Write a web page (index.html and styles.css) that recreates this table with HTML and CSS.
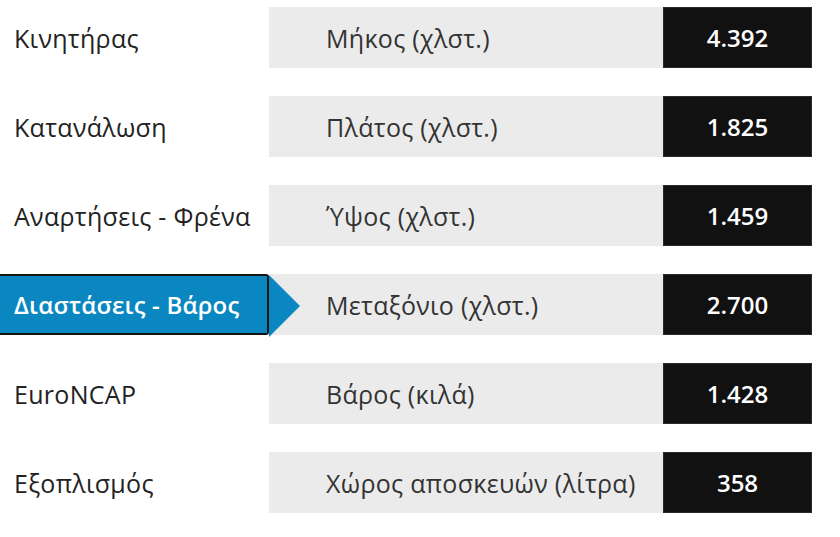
FILE: index.html
```html
<!DOCTYPE html>
<html lang="el">
<head>
<meta charset="utf-8">
<link rel="stylesheet" href="styles.css">
</head>
<body>
<div class="specs">
  <div class="row">
    <div class="tab">Κινητήρας</div>
    <div class="label">Μήκος (χλστ.)</div>
    <div class="value">4.392</div>
  </div>
  <div class="row">
    <div class="tab">Κατανάλωση</div>
    <div class="label">Πλάτος (χλστ.)</div>
    <div class="value">1.825</div>
  </div>
  <div class="row">
    <div class="tab">Αναρτήσεις - Φρένα</div>
    <div class="label">Ύψος (χλστ.)</div>
    <div class="value">1.459</div>
  </div>
  <div class="row">
    <div class="tab active">Διαστάσεις - Βάρος</div>
    <div class="label">Μεταξόνιο (χλστ.)</div>
    <div class="value">2.700</div>
  </div>
  <div class="row">
    <div class="tab">EuroNCAP</div>
    <div class="label">Βάρος (κιλά)</div>
    <div class="value">1.428</div>
  </div>
  <div class="row">
    <div class="tab">Εξοπλισμός</div>
    <div class="label">Χώρος αποσκευών (λίτρα)</div>
    <div class="value">358</div>
  </div>
</div>
</body>
</html>
```
FILE: styles.css
```css
html, body {
  margin: 0;
  padding: 0;
  background: #ffffff;
}
body {
  font-family: "Open Sans", "Noto Sans", sans-serif;
  font-size: 25px;
  letter-spacing: 0.3px;
  color: #222222;
}
.specs {
  display: flex;
  flex-direction: column;
  gap: 28px;
  padding-top: 7px;
}
.row {
  display: grid;
  grid-template-columns: 269px 394px 149px;
  height: 61px;
}
.tab {
  display: flex;
  align-items: center;
  padding-left: 14px;
  color: #222222;
  position: relative;
  white-space: nowrap;
}
.tab.active {
  background: #0a87c1;
  color: #ffffff;
  font-weight: 600;
  font-size: 24px;
  letter-spacing: 0.2px;
  border: 2px solid #141414;
  border-left: none;
  border-radius: 0 3px 3px 0;
}
.tab.active::after {
  content: "";
  position: absolute;
  left: 100%;
  top: -1px;
  margin-left: 2px;
  width: 0;
  height: 0;
  border-top: 31px solid transparent;
  border-bottom: 31px solid transparent;
  border-left: 31px solid #0a87c1;
}
.label {
  display: flex;
  align-items: center;
  padding-left: 57px;
  background: #ebebeb;
  color: #333333;
  white-space: nowrap;
}
.value {
  display: flex;
  align-items: center;
  justify-content: center;
  background: #111111;
  border: 1px solid #2a2a2a;
  color: #ffffff;
  font-weight: 600;
  font-size: 24px;
  letter-spacing: 0;
}
```
